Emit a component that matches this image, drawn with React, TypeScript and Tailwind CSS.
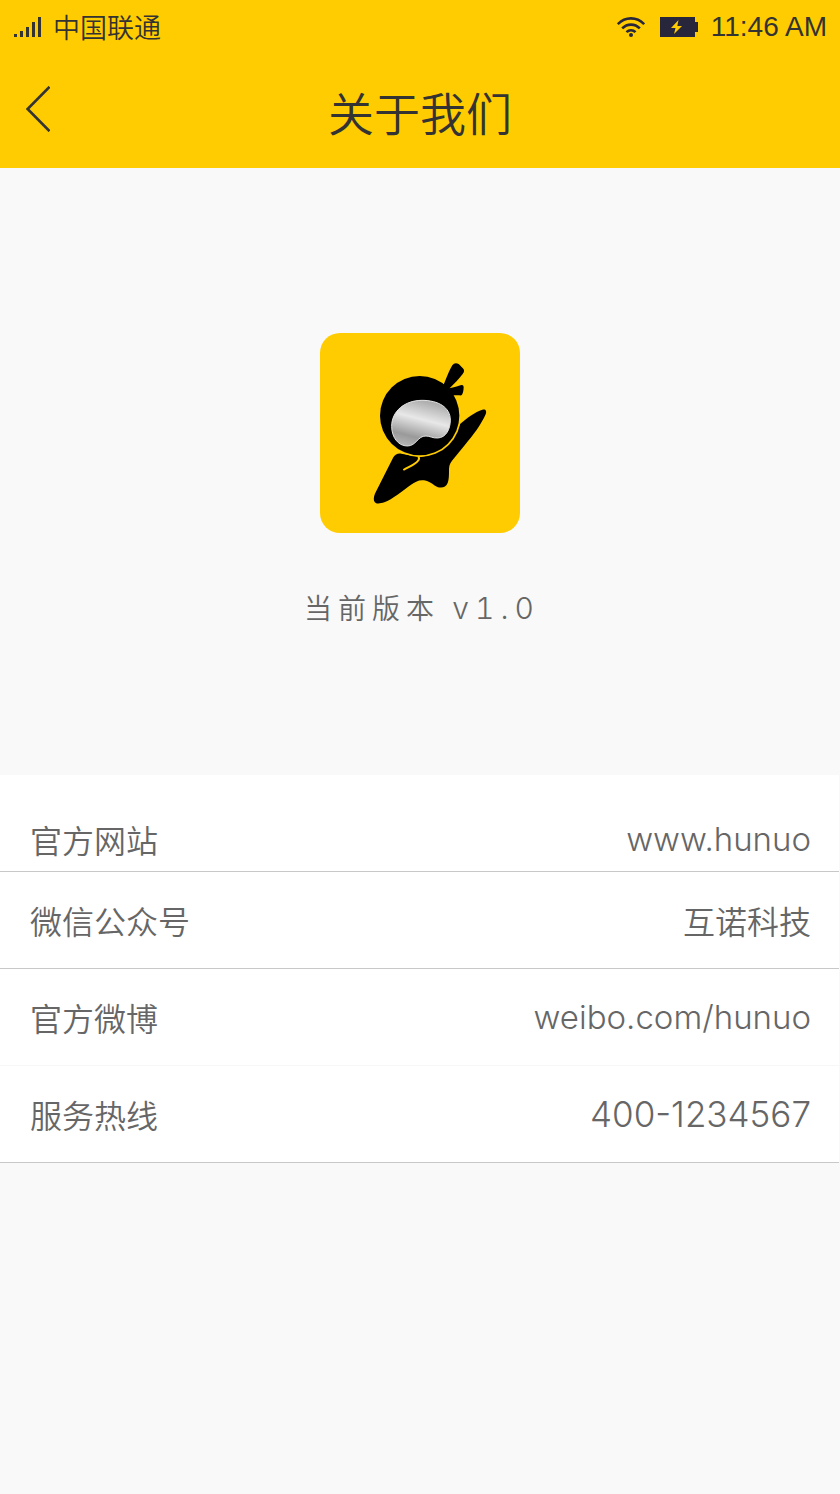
type Row = {
  label: string;
  value: string;
  href?: string;
  className: string;
  valueClassName: string;
};

const rows: Row[] = [
  {
    label: "官方网站",
    value: "www.hunuo",
    href: "#website",
    className: "pt-9 pb-1 border-[#c8c8c8]",
    valueClassName: "text-[33px]",
  },
  {
    label: "微信公众号",
    value: "互诺科技",
    className: "py-5 border-[#c8c8c8]",
    valueClassName: "text-[32px]",
  },
  {
    label: "官方微博",
    value: "weibo.com/hunuo",
    href: "#weibo",
    className: "py-5 border-[#f7f7f7]",
    valueClassName: "text-[33px]",
  },
  {
    label: "服务热线",
    value: "400-1234567",
    href: "tel:400-1234567",
    className: "py-5 border-[#c8c8c8]",
    valueClassName: "text-[35px]",
  },
];

function StatusBar() {
  return (
    <div className="flex items-center justify-between h-[54px] pl-[14px] pr-[13px]">
      <div className="flex items-center">
        <svg width="27" height="20" viewBox="0 0 27 20" fill="#333333" aria-hidden="true">
          <rect x="0" y="17" width="3" height="3" />
          <rect x="6" y="14" width="3" height="6" />
          <rect x="12" y="10" width="3" height="10" />
          <rect x="18" y="5" width="3" height="15" />
          <rect x="24" y="0" width="3" height="20" />
        </svg>
        <span className="pl-3 text-[27px] leading-8 font-[350]">中国联通</span>
      </div>
      <div className="flex items-center">
        <svg width="28" height="20" viewBox="0 0 28 20" fill="none" stroke="#28263a" strokeWidth="2.6" aria-hidden="true">
          <path d="M.8 7.200C8.200-.6 19.800-.6 27.200 7.200" />
          <path d="M5.200 11.400C10.100 6.300 17.900 6.300 22.800 11.400" />
          <path d="M9.500 15.200C12 12.600 16 12.600 18.500 15.200" />
          <circle cx="14" cy="18" r="2" fill="#28263a" stroke="none" />
        </svg>
        <svg className="ml-[15px]" width="38" height="20" viewBox="0 0 38 20" aria-hidden="true">
          <path d="M0 0H35V5H38V15H35V20H0Z" fill="#28263a" />
          <path d="M18.500 3L11 11H15.500L14 17L22 9H17.300Z" fill="#ffcc01" />
        </svg>
        <span className="pl-[13px] text-[28px] leading-8 font-['Liberation_Sans',sans-serif]">
          11:46 AM
        </span>
      </div>
    </div>
  );
}

function Header() {
  return (
    <header className="bg-[#ffcc01] text-[#333333]">
      <StatusBar />
      <div className="grid grid-cols-[80px_1fr_80px] items-center h-[114px] pb-1">
        <button type="button" aria-label="返回" className="flex pl-[26px] cursor-pointer">
          <svg width="24" height="46" viewBox="0 0 24 46" fill="none" stroke="#333333" strokeWidth="2.6">
            <path d="M23.500 .8L1.600 23L23.500 45.200" />
          </svg>
        </button>
        <h1 className="pt-1 text-center text-[46px] leading-[56px] font-[350]">关于我们</h1>
      </div>
    </header>
  );
}

function Logo() {
  return (
    <svg width="200" height="200" viewBox="0 0 600 600" role="img" aria-label="logo">
      <defs>
        <linearGradient id="visor" gradientUnits="userSpaceOnUse" x1="156" y1="135" x2="119" y2="279">
          <stop offset="0" stopColor="#acacac" />
          <stop offset="0.38" stopColor="#e8e8e8" />
          <stop offset="0.76" stopColor="#9a9a9a" />
          <stop offset="1" stopColor="#b8b8b8" />
        </linearGradient>
      </defs>
      <rect width="600" height="600" rx="60" fill="#ffcc01" />
      <g transform="translate(150 66)">
        {/* body */}
        <path d="M70 307C75 298 84 294 94 296L150 306C205 300 250 262 270 207C290 190 316 170 337 164C347 161 351 168 347 178C334 208 310 240 284 271L246 317C238 328 237 335 237 346C237 362 237 374 233 384C227 400 209 401 195 392C184 385 175 377 162 376C147 374 134 381 122 390C98 408 67 433 43 442C28 447 16 448 12 437C10 430 13 420 17 412Z" />
        {/* head, with a thin gap to the body */}
        <circle cx="149" cy="182" r="124" fill="#ffcc01" />
        <circle cx="149" cy="182" r="119" />
        <path d="M145 305C151 312 143 321 131 328C121 334 112 338 100 345" fill="none" stroke="#ffcc01" strokeWidth="6" />
        {/* knot */}
        <path d="M220 92C228 72 238 45 247 31C252 23 260 23 267 28L280 41C284 46 282 52 278 57C268 71 252 86 239 100Q258 96 274 90Q281 89 281 96C281 106 279 114 276 119Q274 122 268 121L249 121L232 106Z" />
        {/* visor */}
        <path
          d="M65 214C65 168 105 136 156 136C205 136 241 157 241 195C241 224 227 248 203 249C188 250 180 243 168 243C143 242 139 273 112 273C84 273 65 246 65 214Z"
          fill="url(#visor)"
          stroke="#e4e4e4"
          strokeWidth="3"
        />
      </g>
    </svg>
  );
}

export default function App() {
  return (
    <div className="min-h-screen bg-[#f9f9f9] text-[#666666] font-['Noto_Sans_CJK_SC',sans-serif]">
      <Header />
      <main>
        <section className="flex flex-col items-center pt-[165px] pb-[147px]">
          <Logo />
          <p className="pt-[54px] pl-1 text-[28px] leading-[40px] font-[350] tracking-[6px]">
            当前版本{" "}
            <span className="text-[30px] leading-[40px] font-light tabular-nums font-['Inter',sans-serif]">
              v1.0
            </span>
          </p>
        </section>
        <dl className="mr-px bg-white">
          {rows.map((row) => (
            <div
              key={row.label}
              className={`flex items-center justify-between pl-[30px] pr-[28px] border-b ${row.className}`}
            >
              <dt className="text-[32px] leading-[56px] font-[350]">{row.label}</dt>
              <dd className={`leading-[56px] ${row.valueClassName}`}>
                {row.href ? (
                  <a href={row.href} className="block font-light font-['Inter',sans-serif]">
                    {row.value}
                  </a>
                ) : (
                  <span className="block font-[350]">{row.value}</span>
                )}
              </dd>
            </div>
          ))}
        </dl>
      </main>
    </div>
  );
}
